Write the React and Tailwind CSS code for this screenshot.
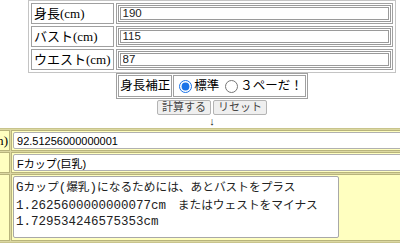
export default function App() {
  const serif = { fontFamily: '"Liberation Serif", "Noto Sans CJK JP", serif' };
  const sans = { fontFamily: '"Liberation Sans", "Noto Sans CJK JP", sans-serif' };
  const mono = { fontFamily: '"Liberation Mono", monospace' };
  const cjk = { fontFamily: '"Noto Sans CJK JP", sans-serif', fontSize: "11.7px" };
  const topRows = [
    ["身長(cm)", "190"],
    ["バスト(cm)", "115"],
    ["ウエスト(cm)", "87"],
  ];
  const J = ({ children }) => <span style={cjk}>{children}</span>;
  return (
    <div className="w-[400px] h-[247px] overflow-hidden bg-white relative text-black">
      <div className="w-[424px] flex flex-col items-center">
        <table className="w-[368px] border-separate border-spacing-[2px] border border-[#c4c4c4]">
          <tbody>
            {topRows.map(([label, value]) => (
              <tr key={label}>
                <td
                  className="w-[80px] border border-[#a0a0a0] px-[2px] py-[1px] text-[13px] leading-[17px] whitespace-nowrap"
                  style={serif}
                >
                  {label}
                </td>
                <td className="border border-[#a0a0a0] p-[1px]">
                  <input
                    readOnly
                    value={value}
                    className="block w-full h-[17px] border-[3px] border-double border-[#9a9a9a] px-[2px] text-[11.5px] text-[#222] outline-none"
                    style={sans}
                  />
                </td>
              </tr>
            ))}
          </tbody>
        </table>

        <table className="border-separate border-spacing-[1px] border border-[#a0a0a0]" style={sans}>
          <tbody>
            <tr>
              <td className="border border-[#a0a0a0] px-[1px] text-[12.5px] leading-[20px] whitespace-nowrap">身長補正</td>
              <td className="border border-[#a0a0a0] pl-[5px] pr-[2px] text-[12.5px] leading-[20px] whitespace-nowrap">
                <div className="flex items-center">
                  <input type="radio" name="h" defaultChecked className="m-0 w-[13px] h-[13px] accent-[#1a73e8]" />
                  <span className="ml-[2px]">標準</span>
                  <input type="radio" name="h" className="m-0 ml-[6px] w-[13px] h-[13px]" />
                  <span className="ml-[2px]">３ペーだ！</span>
                </div>
              </td>
            </tr>
          </tbody>
        </table>

        <div className="flex gap-[2px] mt-[1px]" style={sans}>
          <button className="h-[15px] px-[4px] bg-[#efefef] border border-[#b4b4b4] rounded-[2px] text-[11px] leading-[13px] text-[#444]">
            計算する
          </button>
          <button className="h-[15px] px-[4px] bg-[#efefef] border border-[#b4b4b4] rounded-[2px] text-[11px] leading-[13px] text-[#444]">
            リセット
          </button>
        </div>
        <div className="h-[13px] text-[11px] leading-[13px] text-[#222]" style={sans}>↓</div>

        <table className="self-start -ml-[72px] w-[560px] border-separate border-spacing-[1px] border border-[#c8c48c] bg-[#dcd8a2]">
          <tbody>
            <tr>
              <td className="w-[80px] bg-[#ffffc0] border border-[#b8b47c] px-[1px] text-right text-[13px] leading-[17px] whitespace-nowrap" style={serif}>
                アンダー(cm)
              </td>
              <td className="bg-[#ffffc0] border border-[#b8b47c] p-[1px]">
                <input
                  readOnly
                  value="92.51256000000001"
                  className="block w-full h-[17px] bg-white border border-[#b0b0b0] rounded-[2px] px-[3px] text-[11px] outline-none"
                  style={sans}
                />
              </td>
            </tr>
            <tr>
              <td className="bg-[#ffffc0] border border-[#b8b47c] px-[1px] text-[13px] leading-[17px] whitespace-nowrap" style={serif}>
                カップ
              </td>
              <td className="bg-[#ffffc0] border border-[#b8b47c] p-[1px]">
                <input
                  readOnly
                  value="Fカップ(巨乳)"
                  className="block w-full h-[17px] bg-white border border-[#b0b0b0] rounded-[2px] px-[3px] text-[11px] outline-none"
                  style={sans}
                />
              </td>
            </tr>
            <tr>
              <td className="bg-[#ffffc0] border border-[#b8b47c] px-[1px] text-[13px] whitespace-nowrap" style={serif}>
                目標
              </td>
              <td className="bg-[#ffffc0] border border-[#b8b47c] px-[1px] pt-[1px] pb-[2px]">
                <div
                  className="w-[326px] h-[62px] bg-white border border-[#a8a8a8] rounded-[2px] px-[2px] py-[1px] text-[12.5px] leading-[16px] text-[#222] whitespace-pre overflow-hidden"
                  style={mono}
                >
                  {"G"}<J>カップ</J>{"("}<J>爆乳</J>{")"}<J>になるためには、あとバストをプラス</J>
                  {"\n1.2625600000000077cm"}<J>　またはウェストをマイナス</J>
                  {"\n1.729534246575353cm"}
                </div>
              </td>
            </tr>
          </tbody>
        </table>
      </div>
    </div>
  );
}
